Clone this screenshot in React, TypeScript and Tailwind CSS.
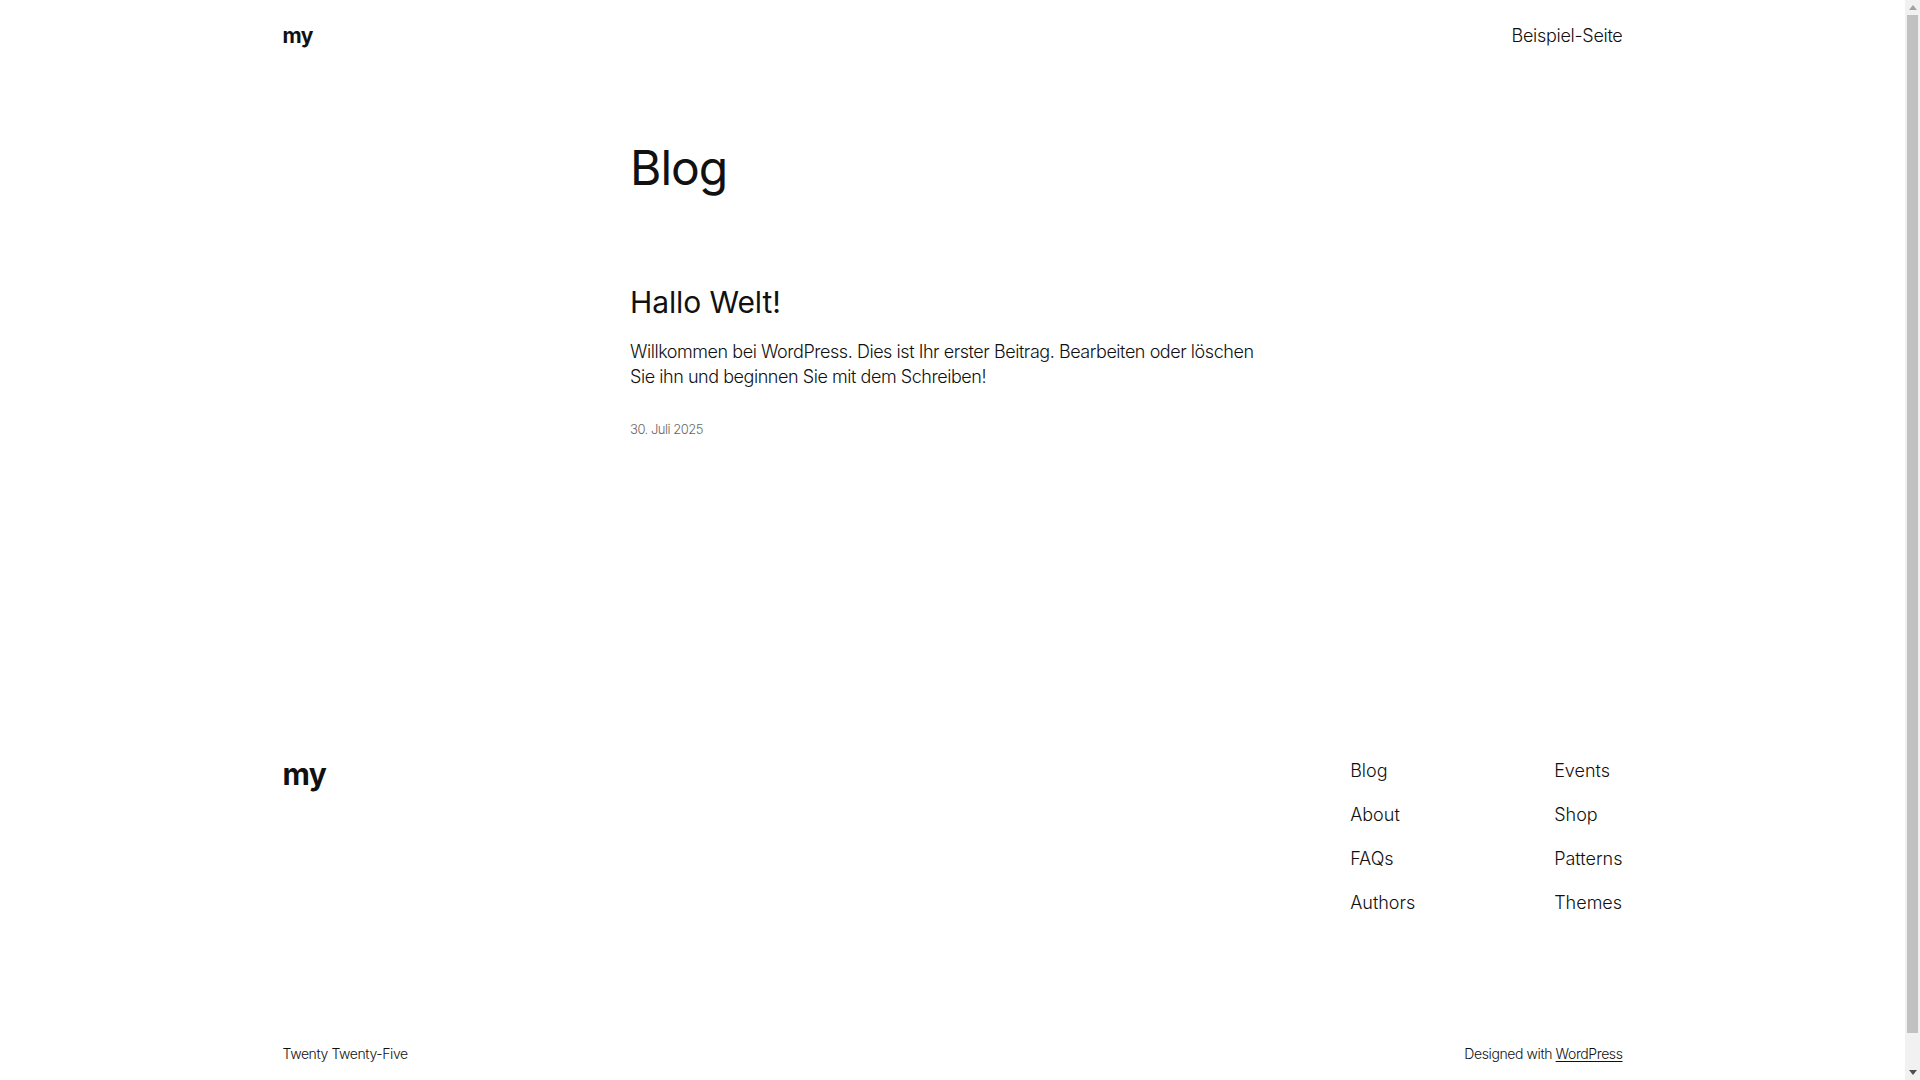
const navLeft = ["Blog", "About", "FAQs", "Authors"];
const navRight = ["Events", "Shop", "Patterns", "Themes"];

function NavColumn({ items, className }: { items: string[]; className?: string }) {
  return (
    <ul className={"flex flex-col gap-[18.8px] " + (className ?? "")}>
      {items.map((item) => (
        <li key={item}>
          <a href="#" className="text-[18px] leading-[1.4] font-light text-[#111111]">
            {item}
          </a>
        </li>
      ))}
    </ul>
  );
}

// classic window scrollbar, as in the screenshot
function Scrollbar() {
  return (
    <div className="w-[15px] shrink-0 bg-[#f1f1f1] flex flex-col items-center">
      <div className="h-[15px] flex items-center justify-center">
        <svg width="8" height="5" viewBox="0 0 8 5">
          <path d="M0 5 L4 0 L8 5 Z" fill="#a3a3a3" />
        </svg>
      </div>
      <div className="h-[1018px] w-[11px] bg-[#c1c1c1]" />
      <div className="flex-1" />
      <div className="h-[15px] flex items-center justify-center">
        <svg width="8" height="5" viewBox="0 0 8 5">
          <path d="M0 0 L8 0 L4 5 Z" fill="#505050" />
        </svg>
      </div>
    </div>
  );
}

export default function App() {
  return (
    <div className="h-screen flex overflow-hidden bg-white text-[#111111] font-['Inter','Liberation_Sans',sans-serif]">
      <div className="flex-1 min-w-0">
        <div className="max-w-[1340px] mx-auto">
          {/* header */}
          <header className="flex justify-between items-center h-[71px]">
            <a href="#" className="text-[21px] leading-[1.2] font-bold tracking-[-0.5px] pt-[1px]">
              my
            </a>
            <nav>
              <a href="#" className="text-[18px] leading-[1.4] font-light tracking-[-0.3px]">
                Beispiel-Seite
              </a>
            </nav>
          </header>

          {/* main */}
          <main className="max-w-[645px] mx-auto">
            <h1 className="mt-[68px] text-[48px] leading-[1.2] font-normal tracking-[-1px]">Blog</h1>
            <article className="mt-[87.4px]">
              <h2 className="text-[30px] leading-[1.2] font-normal tracking-[-0.1px]">
                <a href="#">Hallo Welt!</a>
              </h2>
              <p className="mt-[19px] text-[18px] leading-[1.4] font-light tracking-[-0.45px]">
                Willkommen bei WordPress. Dies ist Ihr erster Beitrag. Bearbeiten oder löschen Sie ihn und
                beginnen Sie mit dem Schreiben!
              </p>
              <time className="block mt-[31px] text-[13px] leading-[1.4] font-light tracking-[-0.5px] text-[#686868]">
                30. Juli 2025
              </time>
            </article>
          </main>

          {/* footer */}
          <footer className="mt-[317px] pb-[50px]">
            <div className="flex justify-between items-start">
              <a href="#" className="text-[30px] leading-[1.25] font-bold tracking-[-0.5px]">
                my
              </a>
              <div className="flex pt-[2px]">
                <NavColumn items={navLeft} className="w-[204px]" />
                <NavColumn items={navRight} />
              </div>
            </div>
            <div className="mt-[129px] flex justify-between text-[14px] leading-[1.4] font-light tracking-[-0.4px]">
              <p>Twenty Twenty-Five</p>
              <p>
                Designed with{" "}
                <a href="#" className="underline underline-offset-2">
                  WordPress
                </a>
              </p>
            </div>
          </footer>
        </div>
      </div>
      <Scrollbar />
    </div>
  );
}
